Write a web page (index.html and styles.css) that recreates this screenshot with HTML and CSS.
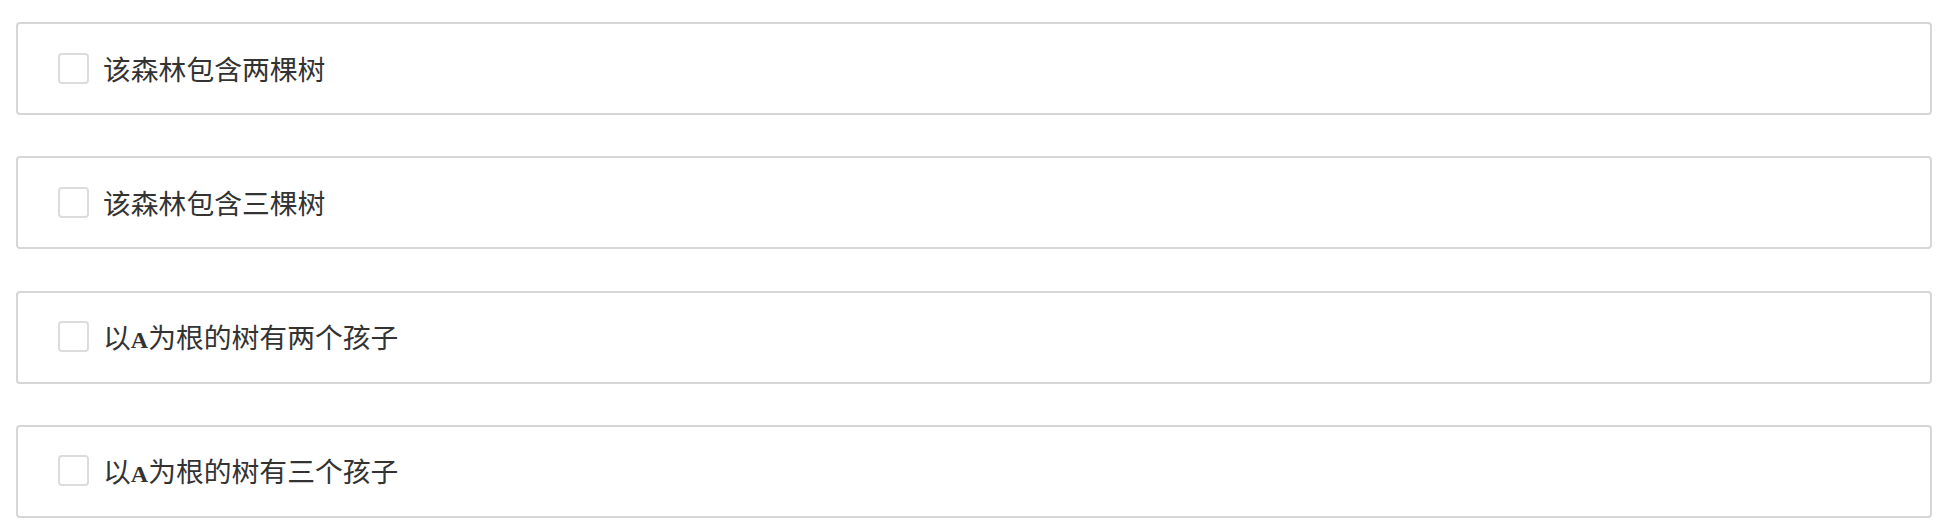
FILE: index.html
```html
<!DOCTYPE html>
<html lang="zh-CN">
<head>
<meta charset="utf-8">
<link rel="stylesheet" href="styles.css">
</head>
<body>
<div class="options">
  <label class="option"><span class="box"></span><span class="text">该森林包含两棵树</span></label>
  <label class="option"><span class="box"></span><span class="text">该森林包含三棵树</span></label>
  <label class="option"><span class="box"></span><span class="text">以<span class="mono">A</span>为根的树有两个孩子</span></label>
  <label class="option"><span class="box"></span><span class="text">以<span class="mono">A</span>为根的树有三个孩子</span></label>
</div>
</body>
</html>
```
FILE: styles.css
```css
html, body {
  margin: 0;
  padding: 0;
  background: #ffffff;
}
.options {
  display: flex;
  flex-direction: column;
  gap: 41.3px;
  padding: 22px 28px 0 16px;
}
.option {
  box-sizing: border-box;
  height: 93px;
  border: 2px solid #d6d6d6;
  border-radius: 4px;
  display: flex;
  align-items: center;
  padding-left: 40px;
}
.box {
  box-sizing: border-box;
  width: 31px;
  height: 31px;
  border: 2px solid #dcdcdc;
  border-radius: 4px;
  margin-right: 14px;
  flex: none;
  margin-top: -1px;
}
.text {
  font-family: "Noto Sans CJK SC", "Noto Sans", sans-serif;
  font-size: 27.8px;
  color: #333333;
  line-height: 1;
}
.mono {
  font-family: "Liberation Serif", serif;
  font-weight: bold;
  font-size: 24px;
}
```
